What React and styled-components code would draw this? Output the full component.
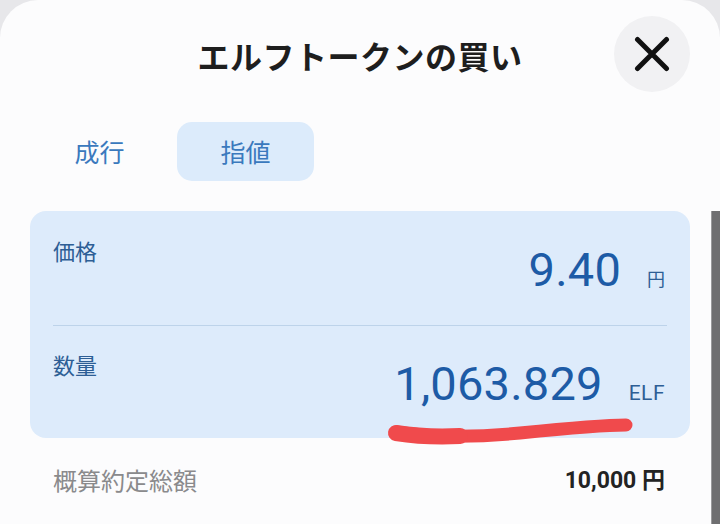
import React from "react";
import styled, { createGlobalStyle } from "styled-components";

const Global = createGlobalStyle`
  html, body { margin: 0; padding: 0; }
  body {
    background: #e7e7ea;
    font-family: "Noto Sans CJK JP", "Noto Sans", sans-serif;
    overflow: hidden;
  }
`;

const Sheet = styled.div`
  position: relative;
  width: 720px;
  height: 524px;
  box-sizing: border-box;
  background: #fcfcfd;
  border-radius: 38px 38px 0 0;
  overflow: hidden;
`;

const Header = styled.header`
  display: grid;
  grid-template-columns: 1fr auto 1fr;
  align-items: center;
  padding: 16px 30px 0 30px;
  height: 76px;
`;

const Title = styled.h1`
  grid-column: 2;
  margin: 0;
  font-size: 32px;
  font-weight: 700;
  color: #1e1e1e;
  line-height: 1;
  letter-spacing: 0.5px;
  transform: translateY(1px);
`;

const CloseButton = styled.button`
  grid-column: 3;
  justify-self: end;
  width: 76px;
  height: 76px;
  border: none;
  border-radius: 50%;
  background: #f1f1f3;
  display: flex;
  align-items: center;
  justify-content: center;
  padding: 0;
  cursor: pointer;
`;

const Tabs = styled.div`
  display: flex;
  gap: 9px;
  padding-left: 31px;
  margin-top: 30px;
`;

const Tab = styled.button`
  width: 137px;
  height: 59px;
  border: none;
  border-radius: 15px;
  background: ${(p) => (p.$active ? "#dcebfb" : "transparent")};
  color: #3a79bd;
  font-family: "Noto Sans CJK JP", sans-serif;
  font-size: 25px;
  font-weight: 400;
  padding: 0;
  line-height: 1;
`;

const Card = styled.section`
  margin: 30px 30px 0 30px;
  background: #ddebfb;
  border-radius: 16px;
  padding: 0 23px;
`;

const Row = styled.div`
  display: flex;
  justify-content: space-between;
  align-items: flex-start;
  height: ${(p) => p.$h}px;
  box-sizing: border-box;
  border-top: ${(p) => (p.$divider ? "1.5px solid #bdd3ea" : "none")};
`;

const Label = styled.div`
  margin-top: ${(p) => p.$top}px;
  font-size: 22px;
  line-height: 22px;
  color: #2d5e95;
`;

const ValueGroup = styled.div`
  margin-top: ${(p) => p.$top}px;
  display: flex;
  align-items: baseline;
  gap: ${(p) => p.$gap}px;
  padding-right: 2px;
`;

const Number = styled.span`
  font-family: Roboto, "Noto Sans", sans-serif;
  font-size: 47px;
  line-height: 1;
  color: #1d5ba6;
  letter-spacing: 0.2px;
`;

const Unit = styled.span`
  font-family: ${(p) => (p.$latin ? "Roboto, sans-serif" : "'Noto Sans CJK JP', sans-serif")};
  font-size: ${(p) => (p.$latin ? 21 : 18)}px;
  line-height: 1;
  color: #2d5e95;
  letter-spacing: ${(p) => (p.$latin ? "0.5px" : "0")};
`;

const Summary = styled.div`
  display: flex;
  justify-content: space-between;
  align-items: center;
  margin: 27px 55px 0 53px;
  height: 30px;
`;

const SummaryLabel = styled.span`
  font-size: 24px;
  color: #8a8a8c;
  line-height: 1;
`;

const SummaryValue = styled.span`
  font-family: Roboto, "Noto Sans CJK JP", sans-serif;
  font-weight: 700;
  font-size: 23px;
  color: #232323;
  line-height: 1;
`;

const Scrollbar = styled.div`
  position: absolute;
  right: 0;
  top: 211px;
  bottom: 0;
  width: 8px;
  background: #6f6f71;
  border-left: 1px solid #9a9a9c;
`;

const Scribble = styled.svg`
  position: absolute;
  left: 0;
  top: 0;
  pointer-events: none;
`;

export default function App() {
  return (
    <>
      <Global />
      <Sheet>
        <Header>
          <Title>エルフトークンの買い</Title>
          <CloseButton aria-label="close">
            <svg width="36" height="36" viewBox="0 0 36 36">
              <path
                d="M3.5 3.5 L32.5 32.5 M32.5 3.5 L3.5 32.5"
                stroke="#111"
                strokeWidth="5"
                strokeLinecap="round"
              />
            </svg>
          </CloseButton>
        </Header>
        <Tabs>
          <Tab>成行</Tab>
          <Tab $active>指値</Tab>
        </Tabs>
        <Card>
          <Row $h={114}>
            <Label $top={28}>価格</Label>
            <ValueGroup $top={35} $gap={26}>
              <Number>9.40</Number>
              <Unit>円</Unit>
            </ValueGroup>
          </Row>
          <Row $h={113} $divider>
            <Label $top={27}>数量</Label>
            <ValueGroup $top={34} $gap={26}>
              <Number>1,063.829</Number>
              <Unit $latin>ELF</Unit>
            </ValueGroup>
          </Row>
        </Card>
        <Summary>
          <SummaryLabel>概算約定総額</SummaryLabel>
          <SummaryValue>10,000 円</SummaryValue>
        </Summary>
        <Scrollbar />
        <Scribble width="720" height="524" viewBox="0 0 720 524">
          <path
            d="M396 432 C 430 437, 470 438, 520 433 S 600 425, 626 425"
            fill="none"
            stroke="#f04a4c"
            strokeWidth="13"
            strokeLinecap="round"
          />
          <path
            d="M396 433 C 415 436, 440 437, 460 436"
            fill="none"
            stroke="#f04a4c"
            strokeWidth="16"
            strokeLinecap="round"
          />
        </Scribble>
      </Sheet>
    </>
  );
}
